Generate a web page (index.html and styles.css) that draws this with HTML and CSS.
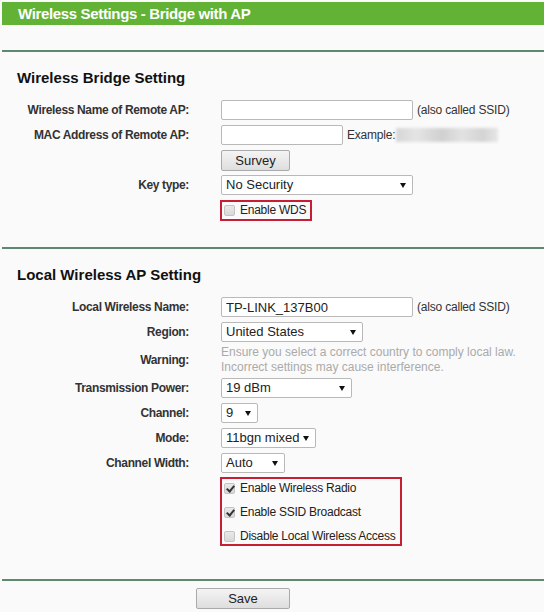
FILE: index.html
```html
<!DOCTYPE html>
<html lang="en">
  <head>
    <meta charset="UTF-8" />
    <title>Wireless Settings - Bridge with AP</title>
    <link rel="stylesheet" href="styles.css">
  </head>
  <body>
    <div class="title">Wireless Settings - Bridge with AP</div>

    <hr class="rule first" />

    <div class="section">
      <h2>Wireless Bridge Setting</h2>
      <div class="form">
        <label>Wireless Name of Remote AP:</label>
        <div class="field">
          <input type="text" class="text w192" />
          <span class="note">(also called SSID)</span>
        </div>

        <label>MAC Address of Remote AP:</label>
        <div class="field">
          <input type="text" class="text w122" />
          <span class="note">Example:</span>
          <span class="blur"></span>
        </div>

        <span></span>
        <div class="field">
          <button class="btn survey">Survey</button>
        </div>

        <label>Key type:</label>
        <div class="field">
          <div class="select w192">No Security</div>
        </div>

        <span></span>
        <div class="field">
          <div class="redbox">
            <div class="check"><span class="box"></span>Enable WDS</div>
          </div>
        </div>
      </div>
    </div>

    <hr class="rule" />

    <div class="section">
      <h2>Local Wireless AP Setting</h2>
      <div class="form">
        <label>Local Wireless Name:</label>
        <div class="field">
          <input type="text" class="text w192" value="TP-LINK_137B00" />
          <span class="note">(also called SSID)</span>
        </div>

        <label>Region:</label>
        <div class="field">
          <div class="select w142">United States</div>
        </div>

        <label>Warning:</label>
        <div class="warning">
          Ensure you select a correct country to comply local law.<br />
          Incorrect settings may cause interference.
        </div>

        <label>Transmission Power:</label>
        <div class="field">
          <div class="select w131">19 dBm</div>
        </div>

        <label>Channel:</label>
        <div class="field">
          <div class="select w37">9</div>
        </div>

        <label>Mode:</label>
        <div class="field">
          <div class="select w95">11bgn mixed</div>
        </div>

        <label>Channel Width:</label>
        <div class="field">
          <div class="select w64">Auto</div>
        </div>

        <span></span>
        <div class="field tall">
          <div class="redbox list">
            <div class="check"><span class="box on"></span>Enable Wireless Radio</div>
            <div class="check"><span class="box on"></span>Enable SSID Broadcast</div>
            <div class="check"><span class="box"></span>Disable Local Wireless Access</div>
          </div>
        </div>
      </div>
    </div>

    <hr class="rule last" />

    <div class="actions">
      <button class="btn save">Save</button>
    </div>
  </body>
</html>
```

FILE: styles.css
```css
body {
  margin: 0;
  padding: 2px 0 0 2px;
  background-color: #fafafa;
  font-family: "Liberation Sans", Arial, sans-serif;
  color: #333;
}

.title {
  height: 23px;
  line-height: 23px;
  background-color: #62b236;
  color: #fff;
  font-size: 15px;
  font-weight: 700;
  letter-spacing: -0.35px;
  padding-left: 16px;
}

.rule {
  margin: 0;
  border: 0;
  border-top: 2px solid #5d8a6e;
}

.rule.first {
  margin-top: 25px;
}

.section {
  padding: 16px 0 27px;
}

h2 {
  margin: 0 0 12px 15px;
  font-size: 15px;
  font-weight: 700;
  color: #111;
  line-height: 20px;
}

.form {
  display: grid;
  grid-template-columns: 187px 1fr;
  column-gap: 32px;
  row-gap: 5px;
  align-items: center;
}

.form label {
  text-align: right;
  font-size: 12px;
  font-weight: 700;
  letter-spacing: -0.35px;
  color: #333;
}

.field {
  display: flex;
  align-items: center;
  height: 20px;
  white-space: nowrap;
}

.text,
.select {
  box-sizing: border-box;
  height: 20px;
  border: 1px solid #b9b9b9;
  background-color: #fff;
  font-family: "Liberation Sans", Arial, sans-serif;
  font-size: 13px;
  color: #222;
  padding: 0 4px;
  margin: 0;
  border-radius: 2px;
}

.select {
  position: relative;
  line-height: 18px;
}

.select:after {
  content: "";
  position: absolute;
  right: 6px;
  top: 7px;
  border-left: 3px solid transparent;
  border-right: 3px solid transparent;
  border-top: 5px solid #111;
}

.w192 { width: 192px; }
.w122 { width: 122px; }
.w142 { width: 142px; }
.w131 { width: 131px; }
.w95 { width: 95px; }
.w64 { width: 64px; }
.w37 { width: 37px; }

.note {
  font-size: 12px;
  letter-spacing: -0.2px;
  color: #333;
  margin-left: 4px;
}

.blur {
  display: inline-block;
  width: 102px;
  height: 14px;
  margin-left: 1px;
  background: linear-gradient(90deg, #d6d6d6, #e4e4e4 20%, #d0d0d0 45%, #e2e2e2 65%, #d4d4d4 85%, #e6e6e6);
  filter: blur(1.5px);
}

.btn {
  box-sizing: border-box;
  height: 21px;
  border: 1px solid #aaa;
  border-radius: 2px;
  background: linear-gradient(#f4f4f4, #dedede);
  font-family: "Liberation Sans", Arial, sans-serif;
  font-size: 13px;
  color: #222;
  padding: 0;
}

.survey {
  width: 69px;
}

.redbox {
  box-sizing: border-box;
  margin-left: -1px;
  border: 2px solid #c61f35;
  padding: 0 4px 0 2px;
  height: 21px;
  display: flex;
  align-items: center;
}

.field.tall {
  height: 69px;
  margin-top: -1px;
}

.redbox.list {
  flex-direction: column;
  align-items: flex-start;
  height: 69px;
  width: 182px;
  overflow: hidden;
}

.check {
  display: flex;
  align-items: center;
  flex-shrink: 0;
  font-size: 12px;
  letter-spacing: -0.25px;
  color: #222;
  height: 21px;
}

.list .check {
  height: 24px;
}

.list .check:first-child {
  margin-top: -3px;
}

.box {
  box-sizing: border-box;
  width: 11px;
  height: 11px;
  border: 1px solid #c4c4c4;
  border-radius: 2px;
  background: linear-gradient(#e9e9e9, #d8d8d8);
  margin-right: 5px;
  position: relative;
}

.box.on:after {
  content: "";
  position: absolute;
  left: 3px;
  top: 0;
  width: 3px;
  height: 6px;
  border-right: 2px solid #333;
  border-bottom: 2px solid #333;
  transform: rotate(40deg);
}

.warning {
  font-size: 12px;
  line-height: 15px;
  color: #aaa;
  margin: -2px 0;
}

.last {
  margin-top: 6px;
}

.actions {
  padding: 7px 0 0 194px;
}

.save {
  width: 94px;
}
```
